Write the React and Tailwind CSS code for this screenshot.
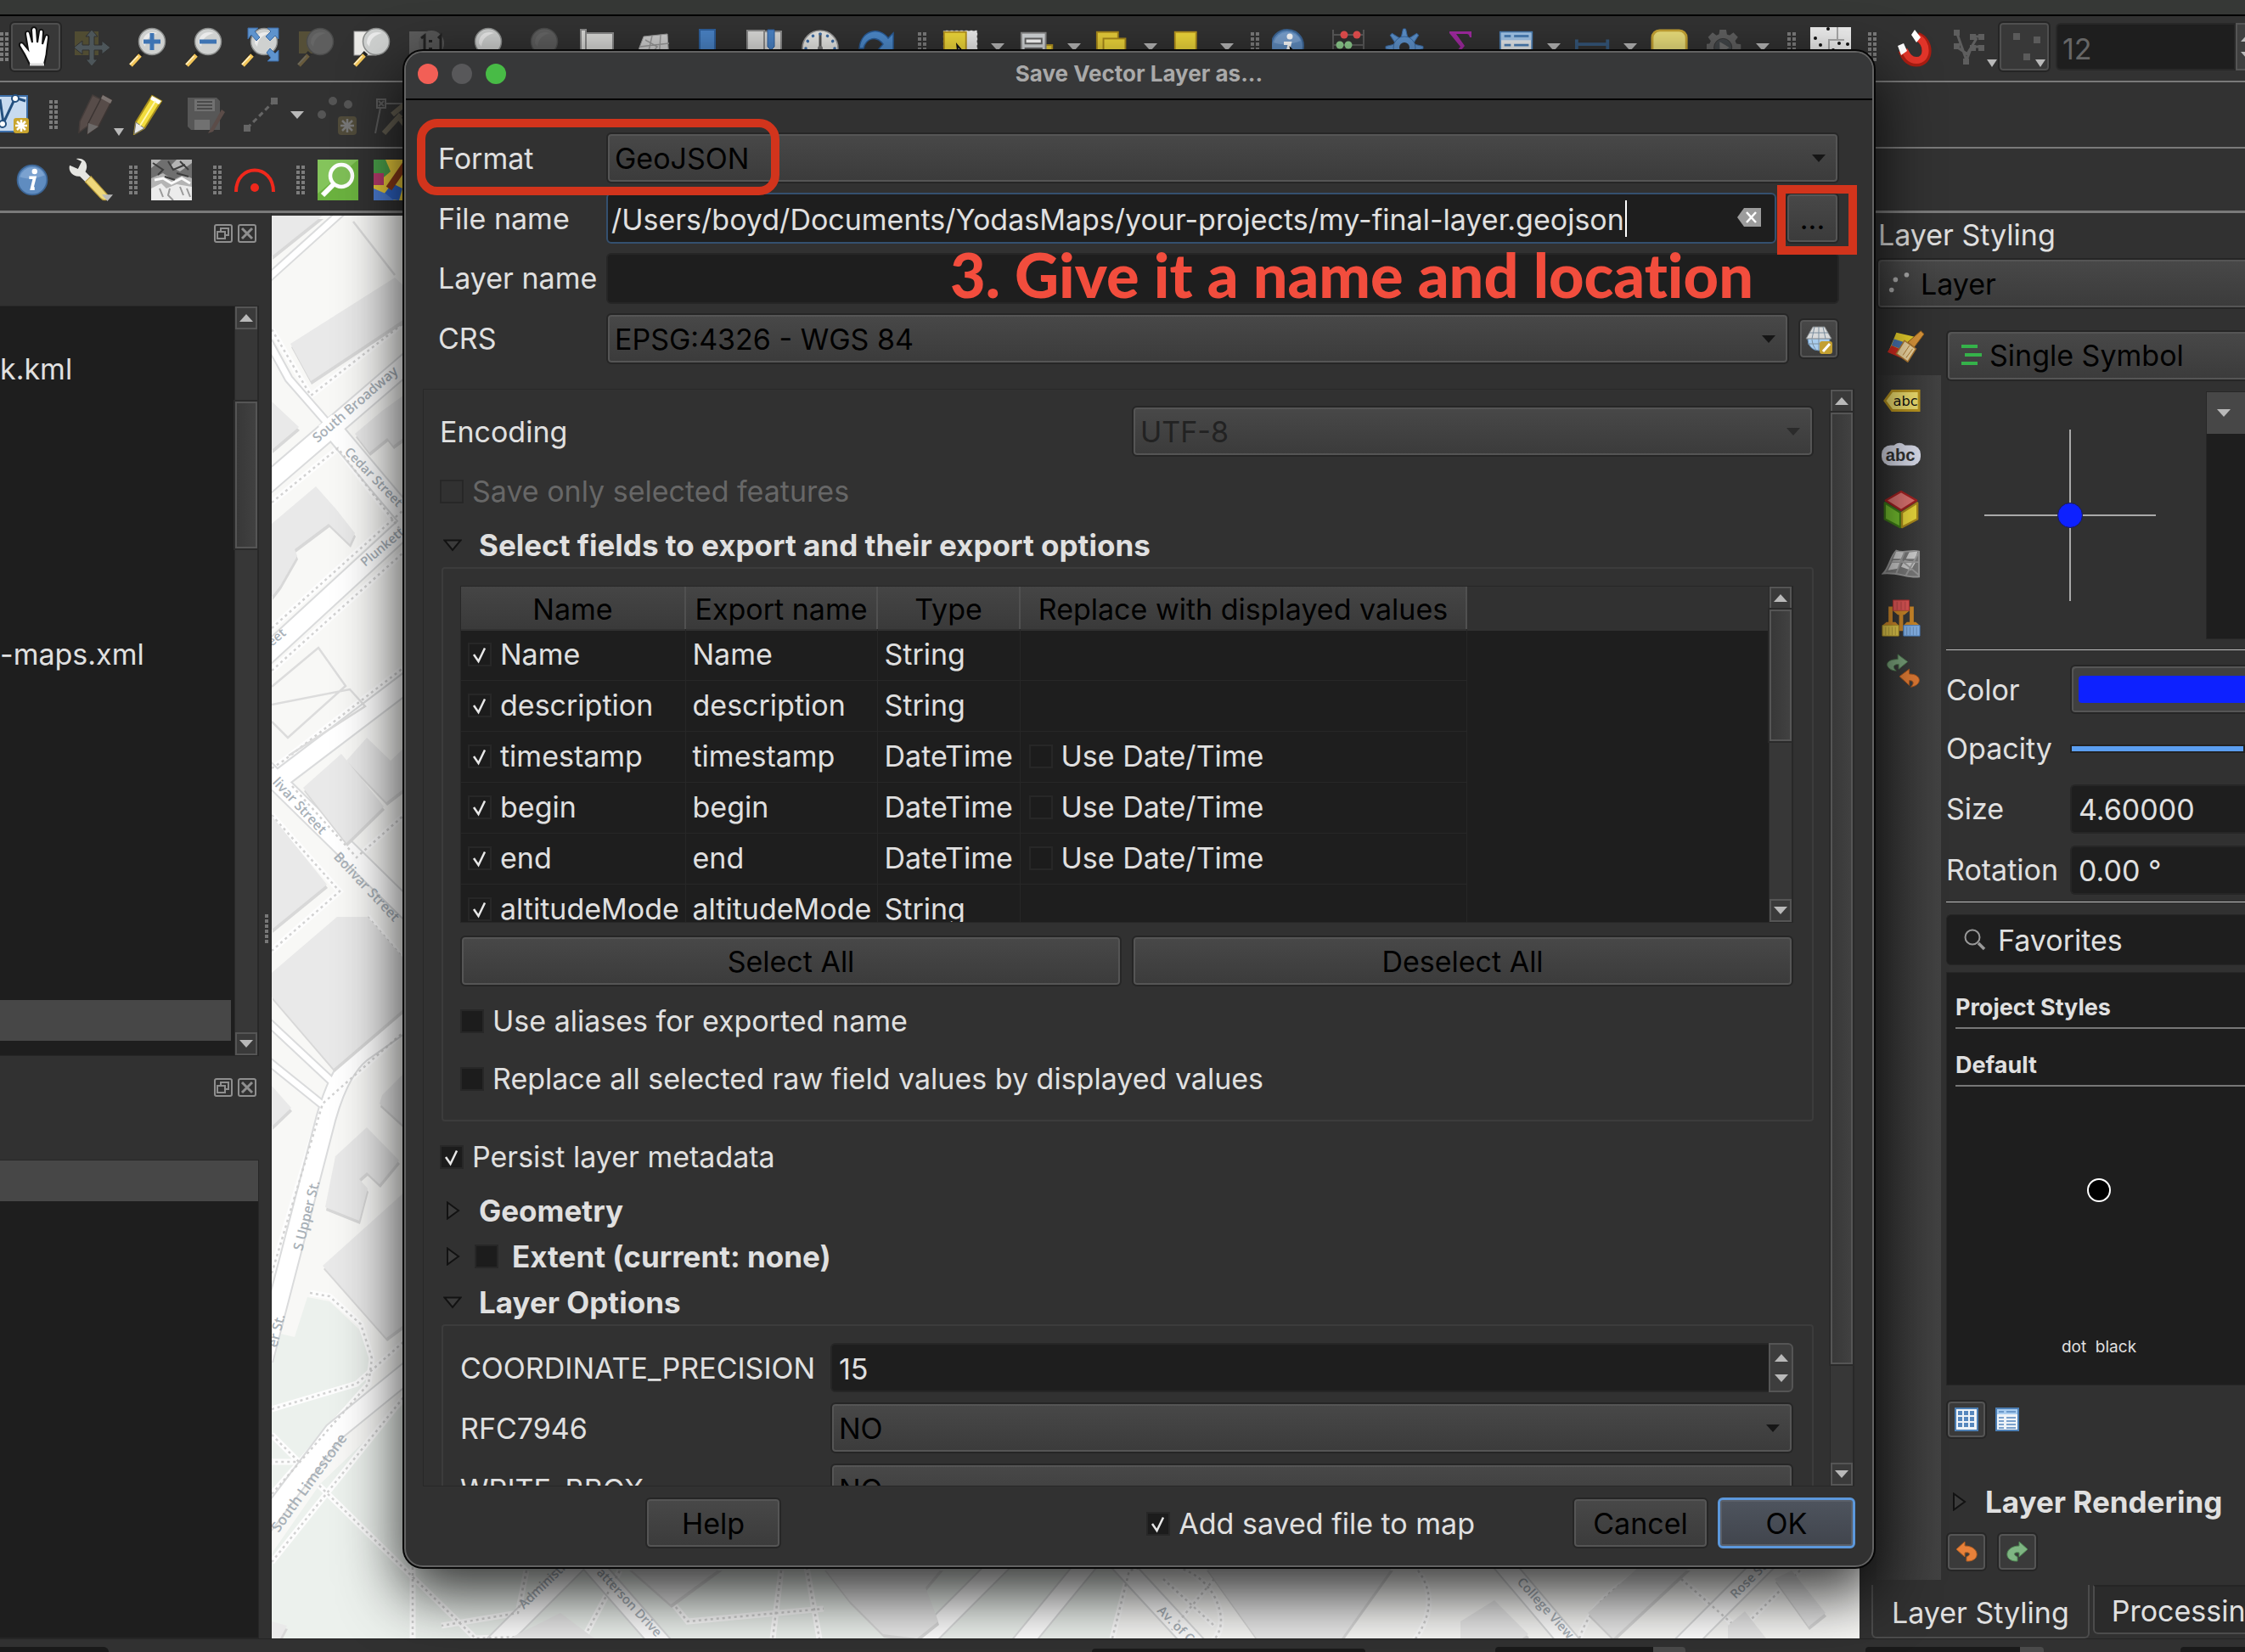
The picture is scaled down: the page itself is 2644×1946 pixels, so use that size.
import React from "react";

const combo =
  "w-full h-[60px] appearance-none rounded-md border-2 border-[#262626] bg-linear-to-b from-[#484848] to-[#3b3b3b] pl-2 pr-12 pt-0.5 text-black shadow-[inset_0_0_0_2px_#555] outline-none";
const field =
  "w-full min-w-0 rounded-md border-2 border-[#262626] bg-[#1e1e1e] px-2 pt-0.5 text-[#e0e0e0] outline-none";
const push =
  "flex items-center justify-center rounded-md border-2 border-[#262626] bg-linear-to-b from-[#484848] to-[#3b3b3b] pt-0.5 text-black shadow-[inset_0_0_0_2px_#555]";

function Tri({ dir = "down", color = "#b9b9b9", w = 16, h = 9 }) {
  return (
    <svg width={w} height={h} viewBox="0 0 16 9" preserveAspectRatio="none" className="shrink-0">
      <path d={dir === "down" ? "M0 0H16L8 9Z" : "M0 9H16L8 0Z"} fill={color} />
    </svg>
  );
}

function Combo({ id, value, disabled, label }) {
  return (
    <div className="relative w-full">
      <select id={id} aria-label={label} disabled={disabled} defaultValue={value} className={combo + (disabled ? " !text-[#222] opacity-100" : "")}>
        <option>{value}</option>
      </select>
      <span className="pointer-events-none absolute right-4 top-[26px]">
        <Tri color={disabled ? "#2b2b2b" : "#161616"} />
      </span>
    </div>
  );
}

function Check({ id, label, checked, disabled, bold }) {
  return (
    <label htmlFor={id} className={"flex h-10 items-center gap-2.5 " + (disabled ? "text-[#676767]" : "") + (bold ? " text-[35px] font-bold" : "")}>
      <span className="relative size-7 shrink-0">
        <input
          id={id}
          type="checkbox"
          defaultChecked={checked}
          disabled={disabled}
          className={"block size-7 appearance-none border-2 border-[#272727] " + (disabled ? "bg-[#313131]" : "bg-[#1c1c1c]")}
        />
        {checked && (
          <svg viewBox="0 0 28 28" className="pointer-events-none absolute inset-0 size-7">
            <path d="M7 14L12.500 22L20 6.500" fill="none" stroke="#e8e8e8" strokeWidth="2.500" />
          </svg>
        )}
      </span>
      <span>{label}</span>
    </label>
  );
}

function Expander({ open }) {
  return (
    <svg width="22" height="22" viewBox="0 0 22 22" className="shrink-0">
      <path d={open ? "M1.500 5.500H20.500L11 17Z" : "M5 1.500L18 11L5 20.500Z"} fill="#3b3b3b" stroke="#121212" strokeWidth="2" />
    </svg>
  );
}

function Section({ open, children }) {
  return (
    <button type="button" className="flex h-10 items-center gap-5 text-[35px] font-bold">
      <Expander open={open} />
      {children}
    </button>
  );
}

function Scrollbar({ before, thumb, after }) {
  const btn = "flex h-[27px] w-full shrink-0 items-center justify-center border-2 border-[#555] bg-[#3a3a3a]";
  return (
    <div className="flex w-[28px] shrink-0 flex-col border-x border-[#292929] bg-[#373737]">
      <button type="button" aria-label="Scroll up" className={btn}><Tri dir="up" /></button>
      <div style={{ flexGrow: before }} />
      <div className="border-2 border-[#555] bg-linear-to-r from-[#383838] to-[#414141] shadow-[0_0_0_2px_#2a2a2a]" style={{ flexGrow: thumb }} />
      <div style={{ flexGrow: after }} />
      <button type="button" aria-label="Scroll down" className={btn}><Tri /></button>
    </div>
  );
}

/* ---------- toolbar drawings ---------- */

function Grip({ className = "" }) {
  return (
    <span className={"flex h-full shrink-0 items-center justify-center " + className}>
      <svg width="12" height="34" viewBox="0 0 12 34">
        {[0, 6, 12, 18, 24, 30].map((y) => (
          <g key={y} fill="#7c7c7c">
            <rect x="0" y={y} width="4" height="4" />
            <rect x="6" y={y} width="4" height="4" />
          </g>
        ))}
      </svg>
    </span>
  );
}

function Ico({ children, className = "", size = 48, label = "Tool" }) {
  return (
    <button type="button" aria-label={label} className={"flex shrink-0 items-center justify-center " + className}>
      <svg width={size} height={size} viewBox="0 0 48 48" className="shrink-0">{children}</svg>
    </button>
  );
}

function Lens({ dim, children, back, noHandle }) {
  return (
    <g opacity={dim ? 0.28 : 1}>
      {back}
      <path d="M17 31L5 45" stroke="#222" strokeWidth="6" />
      {!noHandle && <path d="M15 34L4 46" stroke="#f3c65a" strokeWidth="5" />}
      {!noHandle && <path d="M12.500 35L3 45" stroke="#fff3cf" strokeWidth="1.500" />}
      <circle cx="29" cy="18" r="15.500" fill="#cfd1d0" stroke="#8b8d8c" strokeWidth="1.500" />
      <path d="M18 20C18 9 27 5 36 8C28 10 22 14 21 24Z" fill="#f1f1f1" opacity=".8" />
      {children}
    </g>
  );
}

const Cog = ({ fill, stroke }) => (
  <g>
    {[0, 45, 90, 135, 180, 225, 270, 315].map((a) => (
      <path key={a} d="M20 14L22.500 3H25.500L28 14Z" fill={fill} stroke={stroke} transform={`rotate(${a} 24 25)`} />
    ))}
    <circle cx="24" cy="25" r="13" fill={fill} stroke={stroke} />
  </g>
);

const CogFlat = () => (
  <g>
    {[0, 45, 90, 135, 180, 225, 270, 315].map((a) => (
      <path key={a} d="M19 10L20 3H28L29 10Z" fill="#606060" transform={`rotate(${a} 24 25)`} />
    ))}
    <circle cx="24" cy="25" r="17" fill="#606060" />
    <circle cx="24" cy="25" r="11" fill="#43474a" stroke="#333" />
    <path d="M20 18L32 25L20 32Z" fill="#6e6e6e" />
  </g>
);

const Info = () => (
  <g>
    <circle cx="24" cy="24" r="19" fill="#5f8cc0" stroke="#3c6595" strokeWidth="2" />
    <path d="M8 20A17 17 0 0 1 40 18C30 22 18 24 8 20Z" fill="#8db1da" opacity=".6" />
    <circle cx="27" cy="13" r="3.500" fill="#fff" />
    <path d="M20 21H27L23.500 35H27" fill="none" stroke="#fff" strokeWidth="4" />
  </g>
);

function ToolbarMain() {
  const slot = "w-[66px]";
  const drop = (k, body, w = "w-[90px]") => (
    <span key={k} className={"flex shrink-0 items-center gap-3 " + w}>
      <Ico size={46}>{body}</Ico>
      <Tri />
    </span>
  );
  return (
    <div className="flex h-[78px] shrink-0 items-center overflow-hidden border-b-2 border-[#7a7a7a] bg-[#323232] pb-1">
      <div className="flex w-[9px] shrink-0"><Grip /></div>
      <span className="flex w-[66px] shrink-0 justify-center">
        <button type="button" aria-label="Pan" className="flex h-[60px] w-[62px] items-center justify-center rounded-md border-2 border-[#252525] bg-[#383838] shadow-[inset_0_0_0_2px_#4f4f4f]">
          <svg width="48" height="50" viewBox="0 0 48 50">
            <path d="M17 46L11 34L5 24C4 20 8 19 10 22L15 28L12 10C12 6 16 6 17 9L20 20L19 5C20 1 24 1 25 5L26 20L28 7C29 4 33 4 33 8L32 22L35 13C36 10 40 11 39 15L37 30C37 36 35 40 34 46Z" fill="#fff" stroke="#111" strokeWidth="2" />
            <path d="M17 46H34" stroke="#ddd" strokeWidth="3" />
          </svg>
        </button>
      </span>
      <Ico className={slot} label="Pan to selection">
        <g opacity=".35">
          <rect x="4" y="6" width="28" height="28" fill="#8a7c33" />
          <path d="M24 4L31 12H27V22H36V17L46 25L36 33V28H27V39H31L24 47L17 39H21V28H13V33L3 25L13 17V22H21V12H17Z" fill="#7f9aa4" stroke="#2b2b2b" />
        </g>
      </Ico>
      <Ico className={slot} label="Zoom in"><Lens><path d="M29 8V28M19 18H39" stroke="#3e74b3" strokeWidth="5" /></Lens></Ico>
      <Ico className={slot} label="Zoom out"><Lens><path d="M19 18H39" stroke="#3e74b3" strokeWidth="5" /></Lens></Ico>
      <Ico className={slot} label="Zoom full">
        <Lens />
        <path d="M10 2H22L18 6L24 13L20 17L14 10L10 15ZM46 2V15L42 11L36 17L31 12L37 6L33 2ZM46 41V28L42 32L36 26L32 31L37 37L33 41Z" fill="#5e93cd" stroke="#3a6ba5" />
      </Ico>
      <Ico className={slot} label="Zoom to selection"><Lens dim back={<rect x="4" y="6" width="26" height="26" fill="#b09c45" />} /></Ico>
      <Ico className={slot} label="Zoom to layer"><Lens back={<rect x="3" y="6" width="26" height="28" fill="#ecebe8" stroke="#999" />} /></Ico>
      <Ico className={slot} label="Zoom to native resolution">
        <rect x="2" y="6" width="30" height="28" fill="#5c5c5c" />
        <circle cx="28" cy="20" r="15" fill="#565656" />
        <path d="M16 14L20 11V30M36 14L39 11V30" stroke="#222" strokeWidth="3" fill="none" />
        <path d="M27 16V19M27 25V28" stroke="#222" strokeWidth="4" />
      </Ico>
      <Ico className={slot} label="Zoom last"><Lens noHandle /><path d="M24 30H44V42H24Z" fill="#4a7fbd" /></Ico>
      <Ico className={slot} label="Zoom next"><Lens dim noHandle /></Ico>
      <Ico className={slot} label="New map view">
        <path d="M6 4H12V8H44V42H6Z" fill="#d9d9d7" stroke="#8a8a8a" strokeWidth="2" />
        <path d="M12 8V42" stroke="#8a8a8a" strokeWidth="2" />
        <rect x="30" y="29" width="16" height="16" fill="#c9a52e" />
      </Ico>
      <Ico className={slot} label="New 3D map view">
        <path d="M14 12L42 9L44 40L4 38Z" fill="#cfcfcf" stroke="#999" />
        <path d="M10 24L44 20M24 11L18 38M34 10L32 40M8 32L44 30M16 16L30 24L22 34" stroke="#999" strokeWidth="1.500" fill="none" />
        <rect x="30" y="29" width="16" height="16" fill="#c9a52e" />
      </Ico>
      <Ico className={slot} label="New bookmark">
        <path d="M14 4H32V44L23 36L14 44Z" fill="#4a83c6" stroke="#2e5f9b" strokeWidth="2" />
        <rect x="28" y="29" width="16" height="16" fill="#c9a52e" />
      </Ico>
      <Ico className={slot} label="Show bookmarks">
        <path d="M4 5H24V42H4ZM24 6H44V42H24Z" fill="#d9d9d7" stroke="#8a8a8a" strokeWidth="2" />
        <path d="M28 4H36V24L32 28L28 24Z" fill="#4a83c6" stroke="#2e5f9b" />
      </Ico>
      <Ico className={slot} label="Temporal controller">
        <circle cx="24" cy="26" r="21" fill="#e9e9e6" stroke="#999" strokeWidth="1.500" />
        <path d="M24 8V26" stroke="#555" strokeWidth="3" />
        <circle cx="24" cy="26" r="3" fill="#777" />
        {[0, 30, 60, 90, 270, 300, 330].map((a) => <circle key={a} cx="24" cy="9" r="1.800" fill="#3d6ea8" transform={`rotate(${a} 24 26)`} />)}
      </Ico>
      <Ico className={slot} label="Refresh">
        <path d="M4 26C6 4 28 0 38 14L44 8V28H26L32 21C24 10 12 14 9 26Z" fill="#4d8acb" stroke="#2a5d99" strokeWidth="1.500" />
        <path d="M6 30H22L16 36C24 46 36 42 40 32" fill="none" stroke="#4d8acb" strokeWidth="6" />
      </Ico>
      <Grip className="w-[44px]" />
      {drop("sel", <g><rect x="2" y="4" width="42" height="36" fill="#ececec" stroke="#222" strokeDasharray="3 3" /><rect x="3" y="6" width="27" height="34" fill="#f0d93b" stroke="#b6941f" strokeWidth="2" /><path d="M19 22L36 42H26L22 48Z" fill="#fff" stroke="#111" strokeWidth="2" /></g>)}
      {drop("form", <g><rect x="24" y="22" width="18" height="22" fill="#e9cf3b" stroke="#b6941f" strokeWidth="2" /><rect x="4" y="7" width="30" height="40" fill="#d5d8da" stroke="#888" strokeWidth="2" /><path d="M9 14H29V20H9ZM9 26H29V32H9Z" fill="#fff" stroke="#666" strokeWidth="2" /></g>)}
      {drop("desel", <g><rect x="3" y="6" width="26" height="30" fill="#e9cf3b" stroke="#a98a1b" strokeWidth="2" /><rect x="11" y="14" width="27" height="30" fill="#f0d93b" stroke="#a98a1b" strokeWidth="2" /><rect x="26" y="29" width="18" height="14" fill="#c62b2b" /></g>)}
      {drop("loc", <g><rect x="5" y="6" width="26" height="34" fill="#f0d93b" stroke="#b6941f" strokeWidth="2" /><circle cx="38" cy="34" r="7" fill="#4d80b8" /></g>)}
      <Grip className="w-[20px]" />
      <Ico className={slot} label="Identify"><g transform="translate(-6 -1)"><Info /></g><path d="M22 26L40 44H30L26 48Z" fill="#fff" stroke="#111" strokeWidth="2" /></Ico>
      <Ico className={slot} label="Statistics">
        <path d="M6 4V44M42 4V44M6 10H42M6 22H42M6 34H42" stroke="#5a5a5a" strokeWidth="2" />
        <circle cx="19" cy="10" r="4.500" fill="#e94f4f" /><circle cx="34" cy="10" r="4.500" fill="#e94f4f" />
        <circle cx="14" cy="22" r="4.500" fill="#8fd08f" /><circle cx="24" cy="22" r="4.500" fill="#8fd08f" />
        <circle cx="28" cy="34" r="4.500" fill="#6b9ad0" />
      </Ico>
      <Ico className={slot} label="Toolbox"><Cog fill="#5e93cd" stroke="#3a6ba5" /><circle cx="24" cy="25" r="6" fill="#323232" /></Ico>
      <Ico className={slot} label="Statistical summary"><path d="M11 6H37V13H35C34 9 33 9 30 9H19L29 23L17 38H32C35 38 36 37 38 33L36 44H10V41L24 24L11 8Z" fill="#a12aa1" /></Ico>
      <span className="w-[11px] shrink-0" />
      {drop("tbl", <g><rect x="3" y="6" width="39" height="38" fill="#e8ecef" stroke="#4c80b7" strokeWidth="2" /><rect x="4" y="7" width="37" height="9" fill="#a4c8ec" /><path d="M8 11H16M20 11H38M8 22H16M20 22H38M8 30H16M20 30H38M8 38H16M20 38H38" stroke="#4c80b7" strokeWidth="3" /></g>)}
      {drop("rul", <g><path d="M3 15V28M41 15V28M3 21H41" stroke="#36587c" strokeWidth="4" /><path d="M2 38H44" stroke="#9a9a9a" strokeWidth="6" strokeDasharray="3 2" /></g>)}
      <span className="flex w-[66px] shrink-0"><Ico size={46} label="Map tips"><rect x="2" y="4" width="42" height="36" rx="9" fill="#ece07d" stroke="#c5a334" strokeWidth="3" /><path d="M16 39H30L23 46Z" fill="#ece07d" /></Ico></span>
      {drop("act", <g transform="translate(-4 0)"><CogFlat /></g>)}
      <Grip className="w-[22px]" />
      <Ico className="w-[68px]" label="Georeferencer">
        <rect x="0" y="1" width="48" height="46" fill="#efefef" />
        <path d="M32 1V16H22V40M32 16H40" stroke="#aaa" strokeWidth="2" fill="none" />
        {[[6, 14], [12, 22], [3, 30], [21, 3], [9, 40], [34, 20], [27, 28], [31, 33], [44, 21], [36, 38], [18, 36]].map(([x, y]) => <circle key={x + "-" + y} cx={x} cy={y} r="2" fill="#111" />)}
      </Ico>
      <Grip className="w-[32px]" />
      <Ico className={slot} label="Snapping">
        <path d="M27 12C42 18 42 42 26 42C17 42 13 36 10 28" fill="none" stroke="#a81d12" strokeWidth="11" />
        <path d="M27 13C40 19 40 40 26 40C18 40 15 34 12 28" fill="none" stroke="#e2352a" strokeWidth="8" />
        <path d="M24 4L31 13L26 19L20 10ZM4 23L11 20L15 29L8 34Z" fill="#fff" />
      </Ico>
      <span className="flex w-[65px] shrink-0 items-end pl-1">
        <Ico label="Snapping mode"><path d="M12 6L24 40L30 24M12 24L24 32M30 12H40M30 24H40M24 34L36 14" stroke="#5e5e5e" strokeWidth="3" fill="none" />{[[9, 4], [9, 20], [28, 9], [38, 9], [28, 22], [38, 22], [20, 38]].map(([x, y]) => <rect key={x + "-" + y} x={x} y={y} width="7" height="7" fill="#5e5e5e" />)}</Ico>
        <Tri w={12} />
      </span>
      <button type="button" aria-label="Snap to vertex" className="flex h-[60px] w-[62px] shrink-0 items-end justify-end rounded-md border-2 border-[#252525] bg-[#383838] p-1 shadow-[inset_0_0_0_2px_#4f4f4f]">
        <svg width="38" height="44" viewBox="0 0 38 44" className="-mr-2"><path d="M4 4H12V12H4ZM28 8H36V16H28ZM16 28H24V36H16Z" fill="#5b5b5b" /></svg>
        <Tri w={12} />
      </button>
      <div className="ml-1.5 flex min-w-0 flex-1 overflow-hidden">
        <input aria-label="Tolerance" defaultValue="12" disabled className="h-[56px] w-[212px] shrink-0 rounded-l-md border-2 border-[#282828] bg-[#1e1e1e] px-1.5 pt-1 text-[#666]" />
        <span className="flex h-[56px] w-7 shrink-0 flex-col items-center justify-center gap-3 border-2 border-[#555] bg-[#3f3f3f]"><Tri dir="up" /><Tri /></span>
      </div>
    </div>
  );
}

function ToolbarEdit() {
  return (
    <div className="flex h-[78px] shrink-0 items-center overflow-hidden border-b-2 border-[#7a7a7a] bg-[#323232]">
      <button type="button" aria-label="New layer" className="shrink-0">
        <svg width="36" height="48" viewBox="0 0 36 48">
          <rect x="-4" y="2" width="36" height="42" fill="#c8dbf0" stroke="#3d6ea8" strokeWidth="2" />
          <path d="M0 6L4 34L18 4L30 8" stroke="#24507f" strokeWidth="3" fill="none" />
          <circle cx="3" cy="35" r="4" fill="#fff" stroke="#24507f" strokeWidth="2" /><circle cx="18" cy="5" r="4" fill="#fff" stroke="#24507f" strokeWidth="2" />
          <rect x="16" y="28" width="18" height="18" rx="3" fill="#c9a52e" />
          <path d="M25 30V44M18 37H32M20 32L30 42M30 32L20 42" stroke="#fff" strokeWidth="2.500" />
        </svg>
      </button>
      <Grip className="w-[56px]" />
      <span className="flex w-[52px] shrink-0 items-end">
        <svg width="42" height="50" viewBox="0 0 42 50" className="shrink-0">
          <path d="M17 2L27 7L12 38L1 46L2 33Z" fill="#574c49" stroke="#443c3a" strokeWidth="1.500" />
          <path d="M29 2L40 8L24 39L11 48L12 35Z" fill="#574c49" stroke="#3b3432" strokeWidth="1.500" />
          <path d="M29 2L40 8L38 12L27 6Z" fill="#7b7370" />
          <path d="M12 35L24 39L11 48Z" fill="#6d6a69" />
        </svg>
        <Tri w={12} />
      </span>
      <Ico className="w-[60px]" label="Toggle editing"><path d="M29 2L40 8L20 40L8 47L10 33Z" fill="#f2dd3d" stroke="#a88f1e" strokeWidth="2" /><path d="M10 33L20 40L8 47Z" fill="#e9e9e9" stroke="#777" /><path d="M29 2L40 8L37 12L27 6Z" fill="#fff" /><path d="M33 8L15 37" stroke="#fff7b0" strokeWidth="2" /></Ico>
      <Ico className="w-[74px]" label="Save edits"><path d="M4 4H38L42 8V42H8L4 38Z" fill="#575757" /><path d="M12 6H36V20H12ZM12 30H30V42H12Z" fill="#8c8c8c" opacity=".5" /><path d="M15 9H33M15 13H33M15 17H33" stroke="#4a4a4a" strokeWidth="2" /><path d="M44 18L48 21L34 44L28 46Z" fill="#5b4c48" /></Ico>
      <Ico className="w-[58px]" label="Digitize"><path d="M8 40L40 8" stroke="#666" strokeWidth="3" strokeDasharray="6 4" /><path d="M4 36H12V44H4ZM36 4H44V12H36Z" fill="#666" /></Ico>
      <span className="flex w-[28px] justify-center"><Tri /></span>
      <Ico className="w-[68px]" label="Add point"><circle cx="18" cy="8" r="5" fill="#555" /><circle cx="36" cy="12" r="5" fill="#555" /><circle cx="5" cy="24" r="5" fill="#555" /><rect x="24" y="26" width="22" height="22" rx="4" fill="#504b3a" /><path d="M35 29V45M27 37H43M29 31L41 43M41 31L29 43" stroke="#777" strokeWidth="2.500" /></Ico>
      <Ico className="w-[60px]" label="Vertex tool"><path d="M6 6H16V16H6ZM16 11H46M10 16L4 46M8 8L14 14M14 8L8 14" stroke="#5a5a5a" strokeWidth="2" fill="none" /><path d="M14 46L34 24M24 24L36 14L44 22" stroke="#605b4e" strokeWidth="6" fill="none" /><path d="M32 28L44 44" stroke="#605b4e" strokeWidth="5" /></Ico>
    </div>
  );
}

function ToolbarPlugins() {
  return (
    <div className="flex h-[76px] shrink-0 items-center overflow-hidden border-b-[3px] border-[#7a7a7a] bg-[#323232]">
      <Ico className="w-[76px]" size={44} label="Identify features"><Info /></Ico>
      <Ico className="w-[62px]" size={52} label="Options"><path d="M1 8L10 12L14 4L8 1C18 -1 22 8 18 15L25 22L19 27L12 20C4 21 -1 14 1 8Z" fill="#e6e6e2" /><path d="M24 20L42 40C46 46 38 48 34 43L18 26Z" fill="#eed87c" stroke="#b99b3a" /><path d="M36 40H48L42 47Z" fill="#b9b9b9" /></Ico>
      <Grip className="w-[40px]" />
      <Ico label="Raster terrain">
        <rect width="48" height="48" fill="#b4b4b4" />
        <path d="M0 10L12 0H30L22 8L34 14L48 4V22L38 18L26 24L14 16L0 22Z" fill="#6f6f6f" />
        <path d="M0 34L12 28L18 34L30 29L48 32V48H0Z" fill="#ececec" />
        <path d="M2 4L14 12L8 18M20 2L26 12L40 6M30 16L44 20M16 20L28 24M34 2L44 12" stroke="#3d3d3d" strokeWidth="2" fill="none" />
        <path d="M4 24L14 22L24 28L36 22L46 28" stroke="#fafafa" strokeWidth="3" fill="none" />
        <path d="M10 34L14 44M22 34L20 42L26 48M34 32L38 42M42 34L46 44" stroke="#9a9a9a" strokeWidth="2" fill="none" />
      </Ico>
      <Grip className="w-[50px] pl-3" />
      <Ico label="Range"><path d="M2 38C2 4 46 4 46 38" fill="none" stroke="#f0281c" strokeWidth="4" /><circle cx="24" cy="33" r="5" fill="#f0281c" /></Ico>
      <Grip className="w-[50px] pl-3" />
      <Ico label="Search layers"><rect width="48" height="48" fill="#6bb23f" /><path d="M0 0H48L0 40Z" fill="#8fcc68" opacity=".7" /><circle cx="28" cy="19" r="13" fill="#7fbf57" stroke="#fff" strokeWidth="4.500" /><path d="M19 29L6 42" stroke="#fff" strokeWidth="6" /></Ico>
      <Ico className="ml-[18px]" label="Sketch map"><rect width="48" height="48" fill="#e8c93a" /><path d="M0 0H14L20 14L6 26L0 20Z" fill="#4aa04a" /><path d="M0 16H12V30H0Z" fill="#b53b6c" /><path d="M8 46L22 28L34 34L30 48Z" fill="#2c62c4" /><path d="M0 34L14 40L24 48H0Z" fill="#4a7bd0" /><path d="M18 34L40 2" stroke="#8a3a18" strokeWidth="8" /></Ico>
    </div>
  );
}

/* ---------- map ---------- */

function MapCanvas() {
  const roads = [
    "M300 582L500 410", "M387 500L340 446L316 402", "M383 495L500 634", "M300 784L500 600",
    "M333 915L500 788", "M300 895L560 1150", "M316 1204L393 1276", "M316 1250L383 1304",
    "M500 1187L425 1240Q400 1260 384 1317L310 1602", "M500 1600L393 1687L300 1810", "M300 342L402 250",
    "M560 1960L700 1820", "M660 1800L800 1960", "M1300 1820L1420 1950", "M1760 1830L1870 1960",
    "M1960 1960L2110 1810", "M1200 1940L1290 1830", "M1060 1960L1190 1830",
  ];
  const paths = [
    "M320 388L366 466L476 380", "M320 592L398 528L470 622", "M320 740L476 600", "M320 790L476 650",
    "M320 905L334 896L476 786", "M344 926L420 1010L476 960", "M320 960L400 1050L320 1120",
    "M433 1080L480 1135", "M320 1500L368 1340L380 1300L476 1215", "M365 1523L388 1527L425 1560L438 1600L434 1630L320 1760",
    "M320 1660L420 1630L476 1580", "M320 1690L352 1722L320 1722", "M320 1840L476 1645", "M376 1750L560 1930L690 1925L730 1850",
    "M486 1846L486 1930", "M620 1850L610 1900L520 1915", "M760 1850L810 1910L970 1895M920 1850L910 1930M950 1846L965 1930",
    "M1310 1930L1330 1850Q1400 1830 1430 1880Q1450 1920 1420 1940", "M1370 1860L1430 1915M1430 1860L1380 1920",
    "M1670 1850Q1700 1890 1660 1940", "M1860 1930Q1880 1870 1960 1840", "M1980 1860L2060 1930M2120 1850L2040 1930",
  ];
  const blds = [
    "320,254 380,254 320,302", "342,405 465,327 500,360 366,449", "320,473 352,503 320,530",
    "418,511 450,484 490,455 490,505 463,525 456,516 435,533",
    "320,617 372,573 396,600 418,628 412,641 387,617 347,647 350,655 330,690 320,703",
    "357,928 402,888 452,950 408,993", "408,896 432,869 460,896 490,868 490,918 455,945",
    "320,961 385,1042 320,1095", "320,1146 397,1080 433,1080 490,1146 490,1176 393,1259 320,1174",
    "320,1279 343,1305 320,1327", "395,1362 432,1328 470,1367 447,1395 432,1381 423,1389 433,1400 423,1438 383,1422",
    "380,1491 490,1392 490,1550 455,1576", "320,1910 338,1915 330,1930 320,1930", "450,1290 480,1260 480,1330 447,1300",
    "740,1846 850,1846 790,1890", "970,1846 1110,1846 1090,1870 1105,1910 1080,1930 1040,1925 1000,1885",
    "1420,1846 1640,1846 1580,1930 1480,1930", "1720,1910 1760,1885 1800,1925 1790,1932 1720,1932",
    "1870,1900 1930,1846 1990,1846 1900,1930", "2090,1860 2110,1850 2150,1900 2130,1916", "2035,1915 2055,1898 2080,1930 2035,1930",
    "600,1930 660,1900 700,1930",
  ];
  const names = [
    [374, 522, -41, "South Broadway", 16], [405, 533, 46, "Cedar Street", 15], [430, 668, -40, "Plunkett S", 15],
    [320, 762, -40, "eet", 15], [320, 922, 47, "livar Street", 16], [392, 1010, 47, "Bolivar Street", 16],
    [356, 1474, -76, "S Upper St.", 16], [326, 1588, -76, "er St.", 16], [328, 1806, -54, "South Limestone", 17],
    [617, 1896, -44, "Administra", 15], [702, 1853, 47, "atterson Drive", 15], [1362, 1898, 45, "Av. of C", 15],
    [1786, 1864, 48, "College View A", 15], [2044, 1884, -45, "Rose St", 15],
  ];
  const narrow = (i) => i === 1 || i === 6 || i === 7 || i === 10;
  return (
    <svg viewBox="320 254 1870 1676" preserveAspectRatio="xMinYMin slice" className="block h-full w-full bg-[#f8f8f6]">
      <path d="M362 1528L388 1533L423 1566L437 1599L433 1627L383 1682L320 1765V1605L330 1571L347 1575Z" fill="#ecf1ed" />
      <path d="M500 1630L377 1748L320 1830V1930H1310L1330 1840L500 1840Z" fill="#ecf1ed" />
      {paths.map((d) => <path key={d} d={d} fill="none" stroke="#fdfdfd" strokeWidth="7" />)}
      {roads.map((d, i) => <path key={d} d={d} fill="none" stroke="#dadbdc" strokeWidth={narrow(i) ? 11 : 25} />)}
      {roads.map((d, i) => <path key={"f" + d} d={d} fill="none" stroke="#fff" strokeWidth={narrow(i) ? 7 : 21} />)}
      {paths.map((d) => <path key={"p" + d} d={d} fill="none" stroke="#d2d2d2" strokeWidth="2.500" strokeDasharray="3 4" />)}
      {blds.map((p) => <polygon key={"s" + p} points={p} fill="#d8d8d8" transform="translate(1 4)" />)}
      {blds.map((p) => <polygon key={p} points={p} fill="#e9e9e9" />)}
      <path d="M416 261L465 324M320 809L375 763L407 808L339 869L320 850M320 830L412 812L430 832L340 890" fill="none" stroke="#dcdcdc" strokeWidth="2.500" />
      {names.map(([x, y, r, t, s]) => (
        <text key={t + x} x={x} y={y} transform={`rotate(${r} ${x} ${y})`} fontSize={s} fontWeight="600" fill="#a9b1b8" fontFamily="Open Sans, sans-serif">{t}</text>
      ))}
    </svg>
  );
}

/* ---------- docks ---------- */

function DockButtons() {
  return (
    <div className="flex justify-end gap-1.5 pr-[3px]">
      <button type="button" aria-label="Float panel">
        <svg width="22" height="22" viewBox="0 0 22 22" fill="none" stroke="#8f8f8f" strokeWidth="2"><rect x="1" y="1" width="20" height="20" rx="2" /><rect x="4" y="9" width="9" height="8" /><path d="M8 9V5H17V13H13" /></svg>
      </button>
      <button type="button" aria-label="Close panel">
        <svg width="22" height="22" viewBox="0 0 22 22" fill="none" stroke="#8f8f8f" strokeWidth="2"><rect x="1" y="1" width="20" height="20" rx="2" /><path d="M5 5L17 17M17 5L5 17" strokeWidth="3" /></svg>
      </button>
    </div>
  );
}

function LeftDocks() {
  return (
    <aside className="flex w-[320px] shrink-0 border-r border-[#252525]">
      <div className="flex min-w-0 flex-1 flex-col">
        <div className="h-[109px] shrink-0 pt-[13px]"><DockButtons /></div>
        <div className="flex min-h-0 flex-[884] border border-l-0 border-[#272727] bg-[#1e1e1e]">
          <div className="flex min-w-0 flex-1 flex-col overflow-hidden whitespace-nowrap">
            <div className="mt-[50px] h-12 leading-[48px]">k.kml</div>
            <div className="mt-[288px] h-12 leading-[48px]">-maps.xml</div>
            <div className="mb-[17px] mr-1 mt-auto h-12 bg-[#474747]" />
          </div>
          <Scrollbar before={86} thumb={170} after={574} />
        </div>
        <div className="h-[122px] shrink-0 pt-[26px]"><DockButtons /></div>
        <div className="min-h-0 flex-[564] border border-l-0 border-[#272727] bg-[#1e1e1e]"><div className="h-12 bg-[#474747]" /></div>
      </div>
      <div className="flex w-[14px] items-center justify-end pr-0.5 pt-2">
        <svg width="5" height="36" viewBox="0 0 5 36">{[0, 6, 12, 18, 24, 30].map((y) => <rect key={y} y={y} width="4" height="4" fill="#777" />)}</svg>
      </div>
    </aside>
  );
}

function StyleTabs() {
  const tab = "flex h-[64px] w-full items-center pb-1 pl-1.5";
  const s = (c) => <svg width="46" height="46" viewBox="0 0 48 48">{c}</svg>;
  return (
    <nav className="flex w-[76px] shrink-0 flex-col bg-linear-to-r from-[#333] to-[#424242]" aria-label="Styling pages">
      <button type="button" aria-label="Symbology" className="flex h-[78px] w-full items-center bg-[#313131] pl-2.5 pt-2">
        {s(<g><path d="M14 8L40 14L26 40L4 32Z" fill="#e8d02c" /><path d="M11 16L36 24L30 32L8 24Z" fill="#4a74ae" /><path d="M8 24L32 34L26 42L3 32Z" fill="#d42a20" /><path d="M44 6L48 10L36 26L28 20Z" fill="#d8943a" stroke="#8d5a18" /><path d="M24 18L38 28L28 44L14 34Z" fill="#efd7a2" stroke="#b27b32" strokeWidth="1.500" /><path d="M22 36L30 24M26 39L34 28" stroke="#b27b32" /></g>)}
      </button>
      <button type="button" aria-label="Labels" className={tab}>
        {s(<g><path d="M4 24L13 12H46V36H13Z" fill="#ecdc6e" stroke="#b8941f" strokeWidth="3" /><text x="14" y="30" fontSize="17" fontFamily="DejaVu Sans, sans-serif" fill="#111">abc</text></g>)}
      </button>
      <button type="button" aria-label="Masks" className={tab}>
        {s(<g><rect x="0" y="12" width="48" height="25" rx="11" fill="#d9dcea" /><circle cx="22" cy="17" r="8" fill="#d9dcea" /><text x="5" y="31" fontSize="21" fontWeight="700" fontFamily="Liberation Sans, sans-serif" fill="#333">abc</text></g>)}
      </button>
      <button type="button" aria-label="3D view" className={tab}>
        {s(<g strokeWidth="2.500" strokeLinejoin="round"><path d="M24 2L43 13L24 25L5 13Z" fill="#dd7472" stroke="#a32222" /><path d="M4 16L23 28V46L4 36Z" fill="#74bf2f" stroke="#3f7d18" /><path d="M44 16L25 28V46L44 36Z" fill="#ead93c" stroke="#ab8a1d" /></g>)}
      </button>
      <button type="button" aria-label="Mesh" className={tab}>
        {s(<g stroke="#9b9b9b" strokeWidth="2"><path d="M18 8C28 12 36 6 46 9V40C32 42 20 34 2 36C10 28 10 16 18 8Z" fill="#7a7a7a" /><path d="M18 9L28 10L24 18L14 18ZM34 10L44 9L42 18L30 18ZM14 20L24 20L20 30L8 32ZM28 20L42 22L36 32L24 28Z" fill="#cfcfcf" stroke="none" /><path d="M12 22L46 22M28 10L18 36M46 10L30 38M22 18L46 38" fill="none" /></g>)}
      </button>
      <button type="button" aria-label="Diagrams" className={tab}>
        {s(<g><path d="M11 10V30M37 10V30M24 16V40" stroke="#d08a2a" strokeWidth="5" /><path d="M14 2H34V15H14Z" fill="#e25757" stroke="#a93030" /><path d="M14 15H34L28 20H20Z" fill="#d08a2a" /><path d="M1 33L6 29H17L21 33ZM27 33L31 29H42L47 33Z" fill="#d08a2a" /><path d="M1 33H21V46H1Z" fill="#ead04f" stroke="#b99b2a" /><path d="M27 33H47V46H27Z" fill="#86b4ea" stroke="#4a80c0" /><path d="M5 35V45M9 35V45M13 35V45M17 35V45M31 35V45M35 35V45M39 35V45M43 35V45M19 4V14M24 4V14M29 4V14" stroke="#0003" /></g>)}
      </button>
      <button type="button" aria-label="History" className={tab}>
        {s(<g><path d="M20 2L32 11L21 20V14C14 14 13 18 18 22C6 22 0 8 20 8Z" fill="#7ba37c" stroke="#4e7b50" /><path d="M34 20L22 29L34 40V34C40 34 40 38 36 42C50 40 50 26 34 26Z" fill="#e07b35" stroke="#a9551b" /></g>)}
      </button>
    </nav>
  );
}

const UndoArrow = ({ color, stroke, flip }) => (
  <svg width="26" height="26" viewBox="0 0 26 26"><path transform={flip ? "translate(26 0) scale(-1 1)" : undefined} d="M11 1L1 10L11 19V14C17 13 19 16 13 19V24C30 25 29 6 11 6Z" fill={color} stroke={stroke} /></svg>
);

function RightDock() {
  const small = "flex h-[46px] w-[48px] shrink-0 items-center justify-center rounded-md border-2 border-[#262626] bg-[#3a3a3a] shadow-[inset_0_0_0_2px_#555]";
  return (
    <aside className="flex w-[454px] shrink-0 flex-col overflow-hidden pl-[18px]">
      <h2 className="mt-1 h-11 pl-1 leading-[44px]">Layer Styling</h2>
      <button type="button" className="ml-0.5 mt-[5px] flex h-[60px] shrink-0 items-center gap-2.5 rounded-l-md border-2 border-r-0 border-[#262626] bg-linear-to-b from-[#484848] to-[#3b3b3b] pl-3 pt-0.5 text-black shadow-[inset_2px_2px_0_#555,inset_0_-2px_0_#555]">
        <svg width="28" height="30" viewBox="0 0 30 30"><g fill="#aaa"><circle cx="4" cy="22" r="3" /><circle cx="9" cy="9" r="3" /><circle cx="23" cy="3" r="3" /></g></svg>
        Layer
      </button>
      <div className="flex min-h-0 flex-1">
        <div className="flex shrink-0 pl-0.5"><StyleTabs /></div>
        <div className="flex min-w-0 flex-1 flex-col overflow-hidden pl-1.5">
          <button type="button" className="mt-[25px] flex h-[60px] shrink-0 items-center gap-2 whitespace-nowrap rounded-l-md border-2 border-r-0 border-[#262626] bg-linear-to-b from-[#484848] to-[#3b3b3b] pl-[15px] text-black shadow-[inset_2px_2px_0_#555,inset_0_-2px_0_#555]">
            <svg width="26" height="28" viewBox="0 0 26 28"><path d="M1 3H20M5 13H25M1 23H20" stroke="#35b24a" strokeWidth="4" /></svg>
            Single Symbol
          </button>
          <div className="mt-3 flex h-[292px] shrink-0">
            <div className="flex flex-1 items-center justify-center pr-3.5">
              <svg width="202" height="202" viewBox="0 0 202 202"><path d="M101 0V202M0 101H202" stroke="#a9a9a9" strokeWidth="2" /><circle cx="101" cy="101" r="14.500" fill="#0d21ff" stroke="#1a1a5a" /></svg>
            </div>
            <div className="w-[46px] shrink-0 border border-r-0 border-[#272727] bg-[#1e1e1e]"><div className="flex h-[49px] items-center bg-[#474747] pl-3"><Tri /></div></div>
          </div>
          <div className="mt-3 h-px shrink-0 bg-[#bdbdbd]" />
          <div className="mt-4 grid grid-cols-[146px_1fr] items-center">
            <span className="h-[60px] leading-[62px]">Color</span>
            <button type="button" aria-label="Color" className="flex h-[58px] items-center rounded-l-md border-2 border-r-0 border-[#262626] bg-[#404040] pl-2 shadow-[inset_2px_2px_0_#555,inset_0_-2px_0_#555]"><span className="h-8 flex-1 rounded-l bg-[#0d21ff]" /></button>
            <label htmlFor="opacity" className="h-20 leading-[80px]">Opacity</label>
            <span className="relative flex h-20 items-center">
              <span className="h-2.5 flex-1 border-2 border-[#222] bg-[#5b9ef0]" />
              <input id="opacity" type="range" defaultValue="100" className="absolute inset-0 opacity-0" />
            </span>
            <label htmlFor="size" className="h-[62px] leading-[62px]">Size</label>
            <input id="size" defaultValue="4.60000" className="h-[58px] w-full min-w-0 rounded-l-md border-2 border-r-0 border-[#262626] bg-[#1e1e1e] pl-2" />
            <label htmlFor="rotation" className="mt-3 h-[58px] leading-[58px]">Rotation</label>
            <input id="rotation" defaultValue="0.00 °" className="mt-3 h-[58px] w-full min-w-0 rounded-l-md border-2 border-r-0 border-[#262626] bg-[#1e1e1e] pl-2" />
          </div>
          <div className="mt-2 h-px shrink-0 bg-[#bdbdbd]" />
          <div className="mt-3.5 flex h-[60px] shrink-0 items-center gap-3.5 rounded-l-md border border-r-0 border-[#262626] bg-[#1e1e1e] pl-5">
            <svg width="26" height="26" viewBox="0 0 26 26" fill="none" stroke="#999" strokeWidth="2" className="shrink-0"><circle cx="10" cy="10" r="8.500" /><path d="M17 17L24 24" strokeWidth="3.500" /></svg>
            <input aria-label="Filter symbols" defaultValue="Favorites" className="w-full min-w-0 bg-transparent pt-0.5 outline-none" />
          </div>
          <div className="mt-2 flex min-h-0 flex-1 flex-col border border-r-0 border-[#272727] bg-[#1e1e1e] pl-2.5">
            <h3 className="mt-5 h-[46px] shrink-0 border-b-2 border-[#777] text-[27px] font-bold leading-[42px]">Project Styles</h3>
            <h3 className="mt-[22px] h-[46px] shrink-0 border-b-2 border-[#777] text-[27px] font-bold leading-[42px]">Default</h3>
            <div className="flex w-[338px] flex-1 flex-col items-center justify-between pb-8 pt-[107px]">
              <svg width="30" height="30" viewBox="0 0 30 30"><circle cx="15" cy="15" r="13" fill="#000" stroke="#fff" strokeWidth="2" /></svg>
              <span className="whitespace-pre text-[19px] leading-6">dot  black</span>
            </div>
          </div>
          <div className="mt-[17px] flex shrink-0 items-center gap-2.5">
            <button type="button" aria-label="Icon view" className={small}>
              <svg width="28" height="28" viewBox="0 0 28 28"><rect x="1" y="1" width="26" height="26" fill="#eef3f8" stroke="#4d7fb4" strokeWidth="2" />{[4, 11, 18].map((y) => [4, 11, 18].map((x) => <rect key={x + "-" + y} x={x} y={y} width="5" height="5" fill="#5687bd" />))}</svg>
            </button>
            <button type="button" aria-label="List view">
              <svg width="28" height="28" viewBox="0 0 28 28"><rect x="1" y="1" width="26" height="26" fill="#eef3f8" stroke="#4d7fb4" strokeWidth="2" /><rect x="2" y="2" width="24" height="6" fill="#a9cdf0" /><path d="M4 5H10M13 5H24M4 12H10M13 12H24M4 16H10M13 16H24M4 20H10M13 20H24M4 24H10M13 24H24" stroke="#5687bd" strokeWidth="1.500" /></svg>
            </button>
          </div>
          <div className="mt-[54px] flex shrink-0 whitespace-nowrap pl-1"><Section>Layer Rendering</Section></div>
          <div className="mb-2.5 mt-4 flex shrink-0 gap-3">
            <button type="button" aria-label="Undo" className={small}><UndoArrow color="#e8813a" stroke="#b05d20" /></button>
            <button type="button" aria-label="Redo" className={small}><UndoArrow color="#7fb583" stroke="#4f8a54" flip /></button>
          </div>
        </div>
      </div>
      <div className="-ml-1 mt-1.5 flex h-[63px] shrink-0 items-start whitespace-nowrap" role="tablist">
        <button type="button" role="tab" aria-selected="true" className="h-[63px] shrink-0 rounded-b-md border-2 border-t-0 border-[#4c4c4c] px-[22px] pt-1">Layer Styling</button>
        <button type="button" role="tab" aria-selected="false" className="ml-1 h-[58px] shrink-0 rounded-b-md border-2 border-[#4c4c4c] border-t-[#252525] bg-[#2b2b2b] px-5 pt-1">Processing Toolbox</button>
      </div>
    </aside>
  );
}

/* ---------- dialog ---------- */

const FIELDS = [
  ["Name", "String", false],
  ["description", "String", false],
  ["timestamp", "DateTime", true],
  ["begin", "DateTime", true],
  ["end", "DateTime", true],
  ["altitudeMode", "String", false],
];

function FieldsTable() {
  const th = "h-[50px] border-r-2 border-r-[#505050] bg-linear-to-b from-[#454545] to-[#3a3a3a] p-0 pt-1 text-center font-normal text-black";
  const td = "h-[60px] border-b border-r border-[#272727] p-0";
  return (
    <div className="flex h-[397px] overflow-hidden border border-[#272727]">
      <div className="min-w-0 flex-1 overflow-hidden bg-[linear-gradient(#313131_52px,#1e1e1e_52px)]">
        <table className="w-[1184px] table-fixed border-collapse whitespace-nowrap">
          <colgroup><col className="w-[264px]" /><col className="w-[226px]" /><col className="w-[168px]" /><col className="w-[526px]" /></colgroup>
          <thead><tr><th className={th}>Name</th><th className={th}>Export name</th><th className={th}>Type</th><th className={th}>Replace with displayed values</th></tr></thead>
          <tbody>
            {FIELDS.map(([n, t, r]) => (
              <tr key={n}>
                <td className={td + " pl-2"}><Check id={"f-" + n} label={n} checked /></td>
                <td className={td + " pl-2"}>{n}</td>
                <td className={td + " pl-2"}>{t}</td>
                <td className={td + " pl-2.5"}>{r && <Check id={"r-" + n} label="Use Date/Time" />}</td>
              </tr>
            ))}
          </tbody>
        </table>
      </div>
      <Scrollbar before={0} thumb={154} after={190} />
    </div>
  );
}

function SaveDialog() {
  return (
    <section role="dialog" aria-labelledby="dlg-title" className="absolute bottom-[100px] left-[476px] right-[437px] top-[60px] flex flex-col rounded-[22px] border-2 border-[#636363] bg-[#313131] shadow-[0_0_0_2px_#060606,0_28px_70px_4px_rgba(0,0,0,0.8)]">
      <header className="relative flex h-[56px] shrink-0 items-center justify-center rounded-t-[20px] border-b-2 border-black bg-[#373839] pb-1">
        <div className="absolute left-3.5 flex gap-4">
          <button type="button" aria-label="Close" className="size-6 rounded-full bg-[#f25f56]" />
          <button type="button" aria-label="Minimize" className="size-6 rounded-full bg-[#58585a]" />
          <button type="button" aria-label="Zoom" className="size-6 rounded-full bg-[#48bb46]" />
        </div>
        <h1 id="dlg-title" className="text-[26px] font-bold leading-8 text-[#a9a9a9]">Save Vector Layer as...</h1>
      </header>

      <div className="grid shrink-0 grid-cols-[198px_1fr] items-center gap-y-[11px] pl-[38px] pr-[39px] pt-[38px]">
        <label htmlFor="format" className="pt-0.5">Format</label>
        <Combo id="format" value="GeoJSON" />
        <label htmlFor="file" className="pt-0.5">File name</label>
        <div className="flex gap-[11px]">
          <div className="relative min-w-0 flex-1">
            <input id="file" defaultValue="/Users/boyd/Documents/YodasMaps/your-projects/my-final-layer.geojson" className={field + " h-[60px] !border-[#34506f] !px-1"} />
            <button type="button" aria-label="Clear" className="absolute right-[18px] top-[18px]">
              <svg width="28" height="22" viewBox="0 0 28 22"><path d="M0 11L8 0H28V22H8Z" fill="#9c9c9c" /><path d="M11 5L22 17M22 5L11 17" stroke="#fff" strokeWidth="2.500" /></svg>
            </button>
            <span className="pointer-events-none absolute left-[1200px] top-[9px] h-[43px] w-0.5 bg-white" />
          </div>
          <button type="button" className={push + " h-[60px] w-[63px] shrink-0"}>...</button>
        </div>
        <label htmlFor="layer">Layer name</label>
        <input id="layer" className={field + " h-[60px]"} />
        <label htmlFor="crs">CRS</label>
        <div className="flex items-center gap-[11px]">
          <Combo id="crs" value="EPSG:4326 - WGS 84" />
          <button type="button" aria-label="Select CRS" className={push + " h-[48px] w-[48px] shrink-0"}>
            <svg width="32" height="34" viewBox="0 0 32 34"><circle cx="16" cy="17" r="13" fill="#a9cdee" stroke="#5d87b2" /><path d="M1 16L9 2H23L31 16Z" fill="#d8dadb" stroke="#7d8183" /><path d="M5 9H27M11 2L8 16M21 2L24 16M16 2V30M8 17Q9 26 14 30M3 22H29" stroke="#7d8f9f" fill="none" /><rect x="17" y="19" width="15" height="15" rx="3" fill="#c3a032" /><path d="M21 31L29 22" stroke="#fff" strokeWidth="3" /></svg>
          </button>
        </div>
      </div>

      <div className="ml-[20px] mr-[21px] mt-[29px] flex min-h-0 flex-1 border border-[#282828]">
        <div className="flex min-w-0 flex-1 flex-col overflow-hidden pl-[19px] pr-[19px] pt-[19px]">
          <div className="grid shrink-0 grid-cols-2 items-center gap-3">
            <label htmlFor="enc" className="pt-0.5">Encoding</label>
            <Combo id="enc" value="UTF-8" disabled />
          </div>
          <div className="mt-[21px] shrink-0"><Check id="only" label="Save only selected features" disabled /></div>
          <div className="mt-[23px] shrink-0 pl-1"><Section open>Select fields to export and their export options</Section></div>

          <div className="ml-0.5 mt-1.5 shrink-0 rounded border-2 border-[#3c3c3c] pb-7 pl-5 pr-[22px] pt-5">
            <FieldsTable />
            <div className="mt-[15px] grid grid-cols-2 gap-3">
              <button type="button" className={push + " h-[60px]"}>Select All</button>
              <button type="button" className={push + " h-[60px]"}>Deselect All</button>
            </div>
            <div className="mt-[21px]"><Check id="alias" label="Use aliases for exported name" /></div>
            <div className="mt-7"><Check id="raw" label="Replace all selected raw field values by displayed values" /></div>
          </div>

          <div className="mt-[22px] shrink-0"><Check id="persist" label="Persist layer metadata" checked /></div>
          <div className="mt-[23px] shrink-0 pl-1"><Section>Geometry</Section></div>
          <div className="mt-3.5 flex shrink-0 items-center gap-[15px] pl-1">
            <button type="button" aria-label="Expand extent"><Expander /></button>
            <span className="[&>label]:gap-4"><Check id="extent" label="Extent (current: none)" bold /></span>
          </div>
          <div className="mt-3.5 shrink-0 pl-1"><Section open>Layer Options</Section></div>
          <div className="ml-0.5 mt-1.5 grid shrink-0 grid-cols-[436px_1fr] items-center gap-y-3 rounded border-2 border-[#3c3c3c] pb-5 pl-5 pr-[22px] pt-5">
            <label htmlFor="prec" className="pt-0.5">COORDINATE_PRECISION</label>
            <div className="relative">
              <input id="prec" defaultValue="15" className={field + " block h-[58px]"} />
              <span className="absolute right-0 top-0 flex h-full w-[29px] flex-col items-center justify-center gap-[15px] rounded-r-md border-2 border-[#555] bg-[#3d3d3d]"><Tri dir="up" /><Tri /></span>
            </div>
            <label htmlFor="rfc" className="pt-0.5">RFC7946</label>
            <Combo id="rfc" value="NO" />
            <label htmlFor="bbox" className="pt-0.5">WRITE_BBOX</label>
            <Combo id="bbox" value="NO" />
          </div>
        </div>
        <Scrollbar before={0} thumb={1120} after={116} />
      </div>

      <footer className="flex h-[93px] shrink-0 items-start gap-[11px] pl-[282px] pr-5 pt-[13px]">
        <button type="button" className={push + " h-[60px] w-[160px]"}>Help</button>
        <div className="ml-auto mr-[104px] flex h-[60px] items-center pt-0.5"><Check id="add" label="Add saved file to map" checked /></div>
        <button type="button" className={push + " h-[60px] w-[160px]"}>Cancel</button>
        <button type="button" className="flex h-[60px] w-[162px] items-center justify-center rounded-md border-[3px] border-[#5c98dc] bg-linear-to-b from-[#4e545e] to-[#41454d] pt-0.5 text-black shadow-[inset_0_0_0_2px_#5a5f68]">OK</button>
      </footer>

      <div className="pointer-events-none absolute left-[13px] top-[78px] h-[90px] w-[427px] rounded-[24px] border-[10px] border-[#d2341c]" />
      <div className="pointer-events-none absolute right-[18px] top-[156px] h-[82px] w-[94px] border-[10px] border-[#d2341c]" />
      <p className="pointer-events-none absolute right-[140px] top-[221px] whitespace-nowrap font-['Lato'] text-[72px] font-black leading-[80px] text-[#f24d3d] [font-variant-ligatures:none]">3. Give it a name and location</p>
    </section>
  );
}

export default function App() {
  return (
    <div className="relative flex h-screen flex-col overflow-hidden bg-[#313131] font-['Inter',sans-serif] text-[34px] leading-[44px] text-[#e0e0e0]">
      <div className="h-[19px] shrink-0 border-b-2 border-black bg-[#363836]" />
      <ToolbarMain />
      <ToolbarEdit />
      <ToolbarPlugins />
      <main className="flex min-h-0 flex-1">
        <LeftDocks />
        <div className="min-w-0 flex-1 overflow-hidden pt-[3px]"><MapCanvas /></div>
        <RightDock />
      </main>
      <div className="flex h-4 shrink-0 items-end overflow-hidden border-t border-[#252525]">
        <span className="h-1.5 w-[128px] rounded-tr-md bg-[#1a1a1a]" />
        <span className="ml-[1158px] h-1 w-[322px] rounded-t bg-[#1a1a1a]" />
        <span className="ml-[153px] h-1.5 w-[224px] rounded-t border-r-[38px] border-[#4a4a4a] bg-[#1a1a1a]" />
        <span className="ml-[212px] h-1.5 w-[210px] rounded-t border-r-[28px] border-[#4a4a4a] bg-[#1a1a1a]" />
        <span className="ml-[161px] h-1.5 flex-1 rounded-tl bg-[#1a1a1a]" />
      </div>
      <SaveDialog />
    </div>
  );
}
